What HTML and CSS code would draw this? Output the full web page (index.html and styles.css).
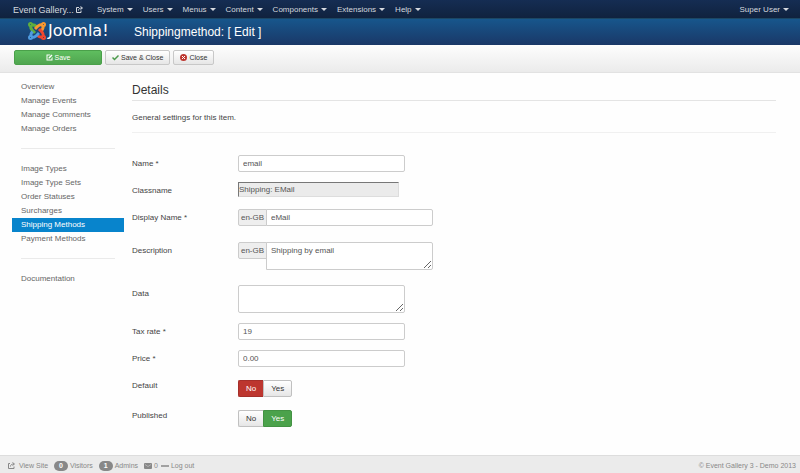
FILE: index.html
```html
<!DOCTYPE html>
<html lang="en">
<head>
<meta charset="utf-8">
<title>Shippingmethod: [ Edit ]</title>
<link rel="stylesheet" href="styles.css">
</head>
<body>
<nav class="navbar">
  <a class="brand" href="#">Event Gallery...
    <svg class="icon-out" viewBox="0 0 14 14"><path d="M6 3H1v10h9V9M5 9c0-4 3-5 7-5M9 1l4 3-4 3"/></svg></a>
  <ul class="menu">
    <li><a class="drop" href="#">System</a></li>
    <li><a class="drop" href="#">Users</a></li>
    <li><a class="drop" href="#">Menus</a></li>
    <li><a class="drop" href="#">Content</a></li>
    <li><a class="drop" href="#">Components</a></li>
    <li><a class="drop" href="#">Extensions</a></li>
    <li><a class="drop" href="#">Help</a></li>
  </ul>
  <a class="drop user" href="#">Super User</a>
</nav>

<header class="header">
  <a class="logo" href="#">
    <svg viewBox="0 0 36 36" fill="none" stroke-width="6" stroke-linejoin="round">
      <g stroke="#5fae3e"><path d="M5 6C5 11 5 13 8 16L14 22M6 6C12 5 14 6 17 9"/><circle cx="5" cy="5" r="2"/></g>
      <g stroke="#f9982f" transform="rotate(90 18 18)"><path d="M5 6C5 11 5 13 8 16L14 22M6 6C12 5 14 6 17 9"/><circle cx="5" cy="5" r="2"/></g>
      <g stroke="#f0472f" transform="rotate(180 18 18)"><path d="M5 6C5 11 5 13 8 16L14 22M6 6C12 5 14 6 17 9"/><circle cx="5" cy="5" r="2"/></g>
      <g stroke="#4e9be0" transform="rotate(270 18 18)"><path d="M5 6C5 11 5 13 8 16L14 22M6 6C12 5 14 6 17 9"/><circle cx="5" cy="5" r="2"/></g>
    </svg>
    <span>Joomla!</span>
  </a>
  <h1>Shippingmethod: [ Edit ]</h1>
</header>

<div class="toolbar">
  <button class="btn save" type="button"><svg viewBox="0 0 14 14"><path fill="#fff" d="M1 1h8L7 3H3v8h8V8l2-2v7H1zM5 7l6-6 2 2-6 6H5z"/></svg>Save</button>
  <button class="btn" type="button"><svg viewBox="0 0 14 14"><path fill="none" stroke="#4a9a4a" stroke-width="3" d="M1 7l4 4 8-8"/></svg>Save &amp; Close</button>
  <button class="btn" type="button"><svg viewBox="0 0 14 14"><circle cx="7" cy="7" r="7" fill="#bd362f"/><path stroke="#fff" stroke-width="2" d="M4 4l6 6M10 4l-6 6"/></svg>Close</button>
</div>

<div class="page">
  <aside class="sidebar">
    <ul>
      <li><a href="#">Overview</a></li>
      <li><a href="#">Manage Events</a></li>
      <li><a href="#">Manage Comments</a></li>
      <li><a href="#">Manage Orders</a></li>
    </ul>
    <ul>
      <li><a href="#">Image Types</a></li>
      <li><a href="#">Image Type Sets</a></li>
      <li><a href="#">Order Statuses</a></li>
      <li><a href="#">Surcharges</a></li>
      <li><a class="active" href="#">Shipping Methods</a></li>
      <li><a href="#">Payment Methods</a></li>
    </ul>
    <ul>
      <li><a href="#">Documentation</a></li>
    </ul>
  </aside>

  <main>
    <h2>Details</h2>
    <p class="intro">General settings for this item.</p>
    <form>
      <div class="row"><label for="name">Name *</label><input class="field" id="name" type="text" value="email"></div>
      <div class="row"><label for="classname">Classname</label><input class="readonly" id="classname" type="text" value="Shipping: EMail" readonly></div>
      <div class="row tall"><label for="display">Display Name *</label><div class="group"><span class="addon">en-GB</span><input class="field" id="display" type="text" value="eMail"></div></div>
      <div class="row area-row"><label for="description">Description</label><div class="group"><span class="addon">en-GB</span><textarea class="field" id="description">Shipping by email</textarea></div></div>
      <div class="row"><label for="data">Data</label><textarea class="field" id="data"></textarea></div>
      <div class="row"><label for="tax">Tax rate *</label><input class="field" id="tax" type="text" value="19"></div>
      <div class="row switch-row"><label for="price">Price *</label><input class="field" id="price" type="text" value="0.00"></div>
      <div class="row switch-row"><span class="label" id="default-label">Default</span>
        <div class="switch" role="group" aria-labelledby="default-label"><button class="no" type="button">No</button><button type="button">Yes</button></div></div>
      <div class="row"><span class="label" id="published-label">Published</span>
        <div class="switch" role="group" aria-labelledby="published-label"><button type="button">No</button><button class="yes" type="button">Yes</button></div></div>
    </form>
  </main>
</div>

<footer>
  <a class="site" href="#"><svg class="icon-out" viewBox="0 0 14 14"><path d="M4 3H1v10h11V9M5 9c0-4 3-5 7-5M9 1l4 3-4 3"/></svg>View Site</a>
  <span><b class="badge">0</b>Visitors</span>
  <span><b class="badge">1</b>Admins</span>
  <a href="#"><svg viewBox="0 0 16 12"><rect width="16" height="12" rx="2" fill="#888"/><path d="M2 3l6 4 6-4" fill="none" stroke="#ddd" stroke-width="1"/></svg>0</a>
  <a class="logout" href="#"><svg viewBox="0 0 16 12"><path d="M0 6h16" stroke="#888" stroke-width="3"/></svg>Log out</a>
  <span class="copy">© Event Gallery 3 - Demo 2013</span>
</footer>
</body>
</html>
```
FILE: styles.css
```css
* { box-sizing: border-box; }
body {
  margin: 0;
  min-height: 100vh;
  display: flex;
  flex-direction: column;
  background: #fefefe;
  color: #444;
  font: 8px/14px "Liberation Sans", Arial, sans-serif;
}
a { color: inherit; text-decoration: none; }
ul { list-style: none; margin: 0; padding: 0; }
button, input, textarea { font: inherit; color: #555; margin: 0; }

.navbar {
  display: flex;
  align-items: center;
  height: 18px;
  padding: 1px 11px 0 13px;
  background: linear-gradient(#152d53, #10223e);
  color: #d5d9df;
}
.brand { width: 84px; font-size: 9px; white-space: nowrap; }
.menu { display: flex; gap: 10px; }
.drop { display: flex; align-items: center; gap: 3px; }
.drop::after {
  content: "";
  border: 3px solid transparent;
  border-top-color: currentColor;
  border-bottom: 0;
}
.user { margin-left: auto; }
.icon-out { width: 7px; height: 7px; fill: none; stroke: currentColor; stroke-width: 2; }

.header {
  display: flex;
  align-items: center;
  height: 27px;
  padding-left: 28px;
  background: linear-gradient(#17568c, #1a3867);
  border-top: 1px solid #1c4764;
  color: #fff;
}
.logo { display: flex; align-items: center; gap: 2px; width: 106px; font: 16px/22px "DejaVu Sans", sans-serif; }
.logo svg { width: 18px; height: 18px; margin-bottom: 2px; }
.logo span { padding-bottom: 2px; }
h1 { margin: 0; font-size: 12px; font-weight: normal; }

.toolbar {
  display: flex;
  gap: 3px;
  height: 28px;
  padding: 5px 14px;
  background: linear-gradient(#fdfdfd, #ebebeb);
  border-bottom: 1px solid #e2e2e2;
}
.btn {
  display: flex;
  align-items: center;
  justify-content: center;
  gap: 2px;
  height: 15px;
  padding: 0 6px;
  border: 1px solid #c8c8c8;
  border-radius: 2px;
  background: linear-gradient(#fff, #e6e6e6);
  color: #333;
  font-size: 7px;
}
.btn svg { width: 7px; height: 7px; }
.save { width: 88px; border-color: #4aa04a; background: linear-gradient(#5fbe5f, #50a550); color: #fff; }

.page { display: flex; flex: 1; gap: 8px; padding: 7px 24px 10px 12px; }
.sidebar { width: 112px; flex: none; color: #666; }
.sidebar ul + ul { padding-top: 12px; }
.sidebar ul + ul::before {
  content: "";
  display: block;
  height: 1px;
  margin: 0 9px 13px;
  background: #eaeaea;
}
.sidebar a { display: block; padding-left: 9px; }
.sidebar .active { background: #0884cc; color: #fff; }

main { flex: 1; }
h2 { margin: 0; padding: 2px 0; font-size: 12px; line-height: 16px; font-weight: normal; color: #333; border-bottom: 1px solid #e4e4e4; }
.intro { margin: 0 0 22px; padding: 10px 0 7px; border-bottom: 1px solid #f0f0f0; }
.row { display: grid; grid-template-columns: 106px 1fr; align-items: start; justify-items: start; min-height: 17px; margin-bottom: 10px; }
.tall { margin-bottom: 16px; }
.area-row { margin-bottom: 15px; }
.switch-row { margin-bottom: 13px; }
label { padding-top: 2px; }
.label { line-height: 12px; }
.group { display: flex; align-items: flex-start; }
.field, .addon { display: block; height: 17px; border: 1px solid #ccc; border-radius: 2px; background: #fff; }
.field { width: 167px; padding: 0 4px; }
.group .field { border-radius: 0 2px 2px 0; }
textarea.field { height: 28px; resize: both; padding-top: 1px; }
.addon { width: 29px; margin-right: -1px; border-radius: 2px 0 0 2px; background: #eee; text-align: center; line-height: 16px; color: #555; }
.readonly { width: 161px; height: 15px; padding: 0; border: 1px solid #ddd; border-top-color: #777; border-left-color: #777; background: #ebebeb; }
.switch { display: flex; }
.switch button { height: 17px; padding: 0 7px; border: 1px solid #c0c0c0; border-radius: 0 2px 2px 0; background: linear-gradient(#fff, #e6e6e6); color: #333; }
.switch button:first-child { border-radius: 2px 0 0 2px; border-right-width: 0; }
.switch .no { background: #bd362f; border-color: #a52f2a; color: #fff; }
.switch .yes { background: #4ba24b; border-color: #439243; color: #fff; }

footer {
  display: flex;
  align-items: center;
  gap: 6px;
  height: 18px;
  padding: 2px 4px 0 8px;
  border-top: 1px solid #ddd;
  background: #ebebeb;
  color: #888;
  font-size: 7px;
}
footer a, footer span { display: flex; align-items: center; gap: 2px; }
footer .logout { margin-left: -3px; }
footer .site { gap: 4px; }
footer svg { width: 8px; height: 6px; }
footer .icon-out { height: 7px; }
.badge { padding: 0 5px; border-radius: 5px; background: #888; color: #fff; line-height: 10px; }
footer .copy { margin-left: auto; }
```
